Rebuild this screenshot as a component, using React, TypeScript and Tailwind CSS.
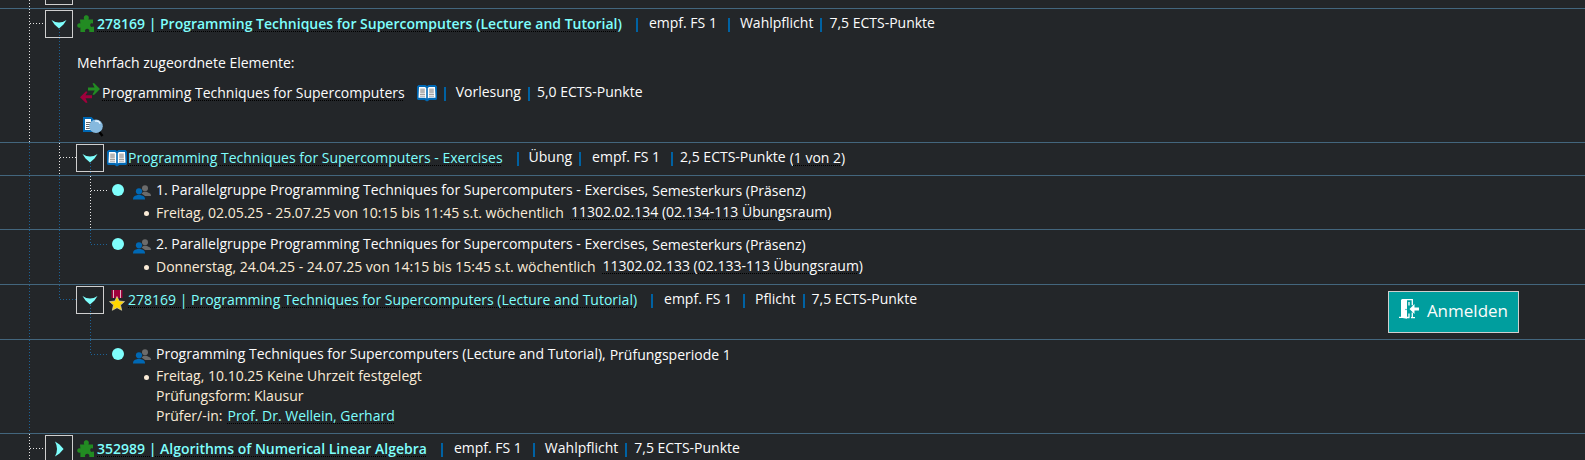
import React, { useState } from 'react';

type LineColor = 'white' | 'blue';
type GuideKind = 'none' | 'line' | 'tee' | 'end';

const vertical: Record<LineColor, string> = {
  white: 'bg-[repeating-linear-gradient(to_bottom,#e8e8e8_0_1px,transparent_1px_3px)]',
  blue: 'bg-[repeating-linear-gradient(to_bottom,#1d6296_0_1px,transparent_1px_3px)]',
};

const horizontal: Record<LineColor, string> = {
  white: 'bg-[repeating-linear-gradient(to_right,#e8e8e8_0_1px,transparent_1px_3px)]',
  blue: 'bg-[repeating-linear-gradient(to_right,#1d6296_0_1px,transparent_1px_3px)]',
};

const linkClass = 'underline decoration-dotted decoration-black decoration-1 underline-offset-2';

// one column of dotted tree lines
function Guide({ kind = 'line', color = 'blue', root = false }: { kind?: GuideKind; color?: LineColor; root?: boolean }) {
  return (
    <div className={`flex shrink-0 self-stretch ${root ? 'w-[45px] pl-[29px]' : 'w-[31px] pl-3.5'}`}>
      {kind !== 'none' && (
        <span className={`w-px shrink-0 ${kind === 'end' ? 'h-[15px]' : ''} ${vertical[color]}`} />
      )}
      {(kind === 'tee' || kind === 'end') && (
        <span className={`mt-3.5 h-px flex-1 ${horizontal[color]}`} />
      )}
    </div>
  );
}

function Toggle({ open, label, onToggle }: { open: boolean; label: string; onToggle?: () => void }) {
  return (
    <div className="flex w-[31px] shrink-0 flex-col self-stretch pt-px">
      <button
        type="button"
        aria-expanded={open}
        aria-label={label}
        onClick={onToggle}
        className="flex size-7 shrink-0 cursor-pointer flex-col items-start border border-[#cfcfcf]"
      >
        {open ? (
          <>
            <svg className="mt-[9px] ml-[5px] shrink-0" width="16" height="9" viewBox="0 0 16 9">
              <path d="M0.500 0 Q8 5.200 15.500 0 L12.500 4.500 L8 8.600 L3.500 4.500 Z" fill="#7ffffd" />
            </svg>
            <span className={`ml-[13px] w-px flex-1 ${vertical.blue}`} />
          </>
        ) : (
          <svg className="mt-[5px] ml-[9px] shrink-0" width="9" height="16" viewBox="0 0 9 16">
            <path d="M0 0.500 Q4 8 0 15.500 L4.500 12.500 L8.600 8 L4.500 3.500 Z" fill="#7ffffd" />
          </svg>
        )}
      </button>
      {open && <span className={`ml-3.5 w-px flex-1 ${vertical.blue}`} />}
    </div>
  );
}

function PuzzleIcon() {
  return (
    <svg width="18" height="18" viewBox="0 0 18 18" className="ml-px shrink-0">
      <path
        d="M3 4.5h4.3C6.2 2.6 7 .3 9.3.3s3.2 2.3 2.1 4.2H16v4.2c-1.300-.8-2.800-.3-2.800 1.400s1.500 2.300 2.800 1.500l1 .2V17h-4.800c.8-2-.4-3.300-2-3.300S7.400 15 8.200 17H3.400v-4.600C1.700 13.300.2 12.300.2 10.500s1.500-2.900 3.200-2z"
        fill="#228b22"
      />
    </svg>
  );
}

function BookIcon() {
  return (
    <svg width="20" height="17" viewBox="0 0 20 17" className="shrink-0">
      <path d="M0 1.500 1.500 0h7L10 1l1.500-1h7L20 1.500V14l-1 1h-6.500L10 16.500 7.500 15H1l-1-1z" fill="#0068b4" />
      <path d="M2 2h6l1.200 1v10.500L8 12.800H1.500z M18 2h-6l-1.200 1v10.500l1.200-.7h6.500z" fill="#fff" />
      <path d="M3.200 3.500h4.600v5H3.200z M12.200 3.500h4.600v5h-4.600z" fill="#b5b5b5" />
      <path d="M3 9.500h5M3 11.200h5M12 9.500h5M12 11.200h5" stroke="#8a8a8a" strokeWidth="0.8" />
    </svg>
  );
}

function MedalIcon() {
  return (
    <svg width="16" height="21" viewBox="0 0 16 21" className="ml-0.5 shrink-0">
      <path d="M2.500 0h11v8h-11z" fill="#a0003c" />
      <path d="M4.500 0v8M11.500 0v8" stroke="#e6c8d2" strokeWidth="0.9" />
      <path
        d="M8 6.500l2.100 4.500 5.400.6-4 3.500 1.200 5.200L8 17.700l-4.700 2.600 1.200-5.200-4-3.500 5.400-.6z"
        fill="#ffd700"
        stroke="#d8d0b0"
        strokeWidth="0.7"
      />
    </svg>
  );
}

function SwapIcon() {
  return (
    <svg width="20" height="20" viewBox="0 0 20 20" className="ml-1 shrink-0">
      <path d="M8 4.500h6.500L12.500.5 14 0l6 6-6 6-1.500-.6 2.200-3.900H8z" fill="#228b22" />
      <path d="M12 12.300H5.500l2-3.400L6 8.300l-6 5.900L6 20l1.500-.6-2-4.100H12z" fill="#a0003c" />
    </svg>
  );
}

function DetailsIcon() {
  return (
    <svg width="21" height="20" viewBox="0 0 21 20">
      <path d="M0 0h8.500L12 3.500V15H0z" fill="#0068b4" />
      <path d="M2 2h6v3h3v8H2z" fill="#fff" />
      <path d="M3 5.500h5M3 7.500h6M3 9.500h6M3 11.500h6" stroke="#666" strokeWidth="1" />
      <path d="M16 14.500l3.500 4.500" stroke="#000" strokeWidth="2.400" />
      <circle cx="13" cy="9.200" r="6.800" fill="#86b9de" />
      <path d="M12 4.200c2.500-.6 4.500.5 5.200 2.600" stroke="#e4f3ff" strokeWidth="1.300" fill="none" />
    </svg>
  );
}

function PeopleIcon() {
  return (
    <svg width="18" height="15" viewBox="0 0 18 15" className="shrink-0">
      <circle cx="12" cy="3.200" r="3" fill="#6b6b6b" />
      <path d="M8.500 8.500 10.500 6.700h3L17 8.400c.7.500 1 1.300 1 2.600h-6z" fill="#6b6b6b" />
      <circle cx="6" cy="6.300" r="3.100" fill="#0068b4" />
      <path d="M0 14.500c0-2.500.8-3.500 4.300-4.500h3.400c3.500 1 4.300 2 4.300 4.500z" fill="#0068b4" />
    </svg>
  );
}

function DoorIcon() {
  return (
    <svg width="20" height="20" viewBox="0 0 20 20" className="shrink-0">
      <path d="M2 0.500 8 0.500V19.800L3.500 19H0v-1.200h2z" fill="#fff" />
      <path d="M3 0.700h10.300v5.500M13.300 13.500v5M8 18.500h2.500M10 18.700V14.500M10 3v3.500M12 18.700h4" stroke="#fff" strokeWidth="1.300" fill="none" />
      <path d="M10.500 10l5-5v3.400H20v3.200h-4.500V15z" fill="#fff" />
      <circle cx="7" cy="10.500" r="0.700" fill="#009e9e" />
    </svg>
  );
}

function Separator() {
  return <span className="mt-[5px] h-3.5 w-0.5 shrink-0 bg-[#0062a3]" />;
}

interface Meta {
  text: string;
  kind: 'term' | 'type' | 'ects';
}

const metaSpacing: Record<Meta['kind'], string> = {
  term: 'ml-[11px] mr-[11px]',
  type: 'ml-2.5 mr-[7px]',
  ects: 'ml-[7px]',
};

function MetaList({ items }: { items: Meta[] }) {
  return (
    <>
      {items.map((item) => (
        <React.Fragment key={item.text}>
          <Separator />
          <span className={`leading-5 ${metaSpacing[item.kind]}`}>{item.text}</span>
        </React.Fragment>
      ))}
    </>
  );
}

interface HeadingProps {
  icon: React.ReactNode;
  title: string;
  meta: Meta[];
  bold?: boolean;
  children?: React.ReactNode;
}

function Heading({ icon, title, meta, bold, children }: HeadingProps) {
  return (
    <div className="flex items-start pt-1 whitespace-nowrap">
      <span className="flex h-[22px] w-[21px] items-center">{icon}</span>
      <a href="#" className={`mr-3.5 leading-[22px] text-[#7ffffd] ${linkClass} ${bold ? 'font-semibold' : ''}`}>
        {title}
      </a>
      <MetaList items={meta} />
      {children}
    </div>
  );
}

function Row({ className = '', children }: { className?: string; children: React.ReactNode }) {
  return <li className={`flex items-start border-t border-[#43667d] ${className}`}>{children}</li>;
}

interface LeafProps {
  title: string;
  suffix: string;
  date: string;
  room?: string;
  children?: React.ReactNode;
}

function Leaf({ title, suffix, date, room, children }: LeafProps) {
  return (
    <div className="flex items-start pt-1 whitespace-nowrap">
      <span className="mt-1 ml-[5px] size-3 shrink-0 rounded-full bg-[#7ffffd]" />
      <div>
        <div className="flex items-start">
          <span className="mt-[5px] ml-[9px] flex w-[23px]">
            <PeopleIcon />
          </span>
          <span className="leading-5">{title},</span>
          <span className="ml-1 leading-[22px]">{suffix}</span>
        </div>
        <div className="flex items-start pl-5 text-[#faebd7]">
          <span className="mt-[9px] mr-[7px] size-[5px] shrink-0 rounded-full bg-[#faebd7]" />
          <div>
            <div className="flex items-start">
              <span className={room ? 'leading-[22px]' : 'leading-5'}>{date}</span>
              {room && (
                <a href="#" className={`ml-[7px] leading-5 text-[#fcfcfc] ${linkClass}`}>
                  {room}
                </a>
              )}
            </div>
            {children}
          </div>
        </div>
      </div>
    </div>
  );
}

export default function App() {
  const [lectureOpen, setLectureOpen] = useState(true);
  const [exercisesOpen, setExercisesOpen] = useState(true);
  const [examOpen, setExamOpen] = useState(true);

  return (
    <ul className="h-screen overflow-hidden bg-[#232629] font-['Open_Sans','Noto_Sans',sans-serif] text-sm text-[#fcfcfc]">
      <li className="flex h-2 items-end overflow-hidden">
        <Guide root color="white" />
        <span className="mb-[3px] size-7 border border-[#cfcfcf]" />
      </li>

      <Row className={lectureOpen ? 'min-h-[134px]' : 'min-h-[33px]'}>
        <Guide root kind="tee" color="white" />
        <Toggle open={lectureOpen} label="278169 auf- oder zuklappen" onToggle={() => setLectureOpen(!lectureOpen)} />
        <div>
          <Heading
            bold
            icon={<PuzzleIcon />}
            title="278169 | Programming Techniques for Supercomputers (Lecture and Tutorial)"
            meta={[
              { text: 'empf. FS 1', kind: 'term' },
              { text: 'Wahlpflicht', kind: 'type' },
              { text: '7,5 ECTS-Punkte', kind: 'ects' },
            ]}
          />
          {lectureOpen && (
            <>
              <p className="mt-[18px] pl-px leading-5">Mehrfach zugeordnete Elemente:</p>
              <div className="mt-[9px] flex items-start whitespace-nowrap">
                <span className="mt-px flex w-[26px]">
                  <SwapIcon />
                </span>
                <a href="#" className={`mr-3 leading-[22px] ${linkClass}`}>
                  Programming Techniques for Supercomputers
                </a>
                <span className="mt-[3px] mr-[7px]">
                  <BookIcon />
                </span>
                <MetaList
                  items={[
                    { text: 'Vorlesung', kind: 'type' },
                    { text: '5,0 ECTS-Punkte', kind: 'ects' },
                  ]}
                />
              </div>
              <a href="#" aria-label="Details anzeigen" className="mt-[13px] ml-[7px] inline-block">
                <DetailsIcon />
              </a>
            </>
          )}
        </div>
      </Row>

      {lectureOpen && (
        <>
          <Row className="min-h-[33px]">
            <Guide root />
            <Guide kind="tee" color="white" />
            <Toggle open={exercisesOpen} label="Exercises auf- oder zuklappen" onToggle={() => setExercisesOpen(!exercisesOpen)} />
            <Heading
              icon={<BookIcon />}
              title="Programming Techniques for Supercomputers - Exercises"
              meta={[
                { text: 'Übung', kind: 'type' },
                { text: 'empf. FS 1', kind: 'term' },
                { text: '2,5 ECTS-Punkte', kind: 'ects' },
              ]}
            >
              <span className="ml-1 leading-[22px]">
                (<span className={linkClass}>1 von 2</span>)
              </span>
            </Heading>
          </Row>

          {exercisesOpen && (
            <>
              <Row className="min-h-[54px]">
                <Guide root />
                <Guide />
                <Guide kind="tee" color="white" />
                <Leaf
                  title="1. Parallelgruppe Programming Techniques for Supercomputers - Exercises"
                  suffix="Semesterkurs (Präsenz)"
                  date="Freitag, 02.05.25 - 25.07.25 von 10:15 bis 11:45 s.t. wöchentlich"
                  room="11302.02.134 (02.134-113 Übungsraum)"
                />
              </Row>
              <Row className="min-h-[55px]">
                <Guide root />
                <Guide />
                <Guide kind="end" />
                <Leaf
                  title="2. Parallelgruppe Programming Techniques for Supercomputers - Exercises"
                  suffix="Semesterkurs (Präsenz)"
                  date="Donnerstag, 24.04.25 - 24.07.25 von 14:15 bis 15:45 s.t. wöchentlich"
                  room="11302.02.133 (02.133-113 Übungsraum)"
                />
              </Row>
            </>
          )}

          <Row className="min-h-[55px]">
            <Guide root />
            <Guide kind="end" />
            <Toggle open={examOpen} label="Prüfung auf- oder zuklappen" onToggle={() => setExamOpen(!examOpen)} />
            <Heading
              icon={<MedalIcon />}
              title="278169 | Programming Techniques for Supercomputers (Lecture and Tutorial)"
              meta={[
                { text: 'empf. FS 1', kind: 'term' },
                { text: 'Pflicht', kind: 'type' },
                { text: '7,5 ECTS-Punkte', kind: 'ects' },
              ]}
            />
            <button
              type="button"
              className="mt-1.5 mr-[66px] ml-auto flex h-[42px] shrink-0 cursor-pointer items-start gap-2 border border-[#cfcfcf] bg-[#009e9e] px-2.5 pt-[7px] text-[17px] leading-6"
            >
              <DoorIcon />
              Anmelden
            </button>
          </Row>

          {examOpen && (
            <Row className="min-h-[94px]">
              <Guide root />
              <Guide kind="none" />
              <Guide kind="end" />
              <Leaf
                title="Programming Techniques for Supercomputers (Lecture and Tutorial)"
                suffix="Prüfungsperiode 1"
                date="Freitag, 10.10.25 Keine Uhrzeit festgelegt"
              >
                <p className="leading-5">Prüfungsform: Klausur</p>
                <p className="flex gap-[5px] leading-5">
                  Prüfer/-in:
                  <a href="#" className={`text-[#7ffffd] ${linkClass}`}>
                    Prof. Dr. Wellein, Gerhard
                  </a>
                </p>
              </Leaf>
            </Row>
          )}
        </>
      )}

      <Row>
        <Guide root kind="tee" color="white" />
        <Toggle open={false} label="352989 aufklappen" />
        <Heading
          bold
          icon={<PuzzleIcon />}
          title="352989 | Algorithms of Numerical Linear Algebra"
          meta={[
            { text: 'empf. FS 1', kind: 'term' },
            { text: 'Wahlpflicht', kind: 'type' },
            { text: '7,5 ECTS-Punkte', kind: 'ects' },
          ]}
        />
      </Row>
    </ul>
  );
}
